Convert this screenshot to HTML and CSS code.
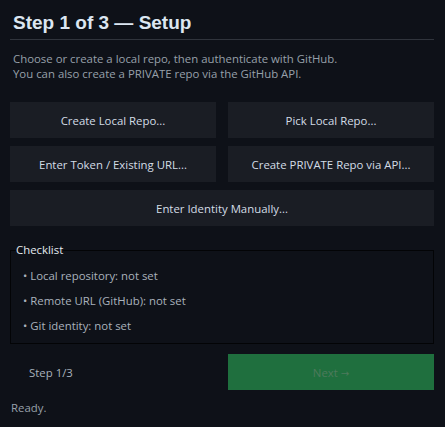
FILE: index.html
```html
<!DOCTYPE html>
<html>
<head>
<meta charset="utf-8">
<link rel="stylesheet" href="styles.css">
</head>
<body>
<div class="app">
  <div class="header">
    <h1 class="title">Step 1 of 3 — Setup</h1>
  </div>
  <p class="desc">Choose or create a local repo, then authenticate with GitHub.<br>You can also create a PRIVATE repo via the GitHub API.</p>
  <div class="actions">
    <button class="btn">Create Local Repo...</button>
    <button class="btn">Pick Local Repo...</button>
    <button class="btn">Enter Token / Existing URL...</button>
    <button class="btn">Create PRIVATE Repo via API...</button>
    <button class="btn btn-wide">Enter Identity Manually...</button>
  </div>
  <fieldset class="checklist">
    <legend class="checklist-title">Checklist</legend>
    <div class="item">• Local repository: not set</div>
    <div class="item">• Remote URL (GitHub): not set</div>
    <div class="item">• Git identity: not set</div>
  </fieldset>
  <div class="footer">
    <div class="step">Step 1/3</div>
    <button class="btn btn-next" disabled>Next <span class="arrow">→</span></button>
  </div>
  <div class="status">Ready.</div>
</div>
</body>
</html>
```
FILE: styles.css
```css
html, body {
  margin: 0;
  padding: 0;
  background: #0e1118;
}
body {
  width: 445px;
  height: 427px;
  overflow: hidden;
  font-family: "Open Sans", "Noto Sans", sans-serif;
  font-size: 11.4px;
  color: #c9d1d9;
}
.app {
  padding: 0 11px 0 10px;
}
.header {
  padding-top: 12px;
  padding-bottom: 5px;
  border-bottom: 1px solid #30343c;
}
.title {
  margin: 0;
  padding-left: 3px;
  font-family: "Liberation Sans", Arial, sans-serif;
  font-weight: bold;
  font-size: 19px;
  line-height: 22px;
  color: #dce6f1;
}
.desc {
  margin: 11px 0 0 3px;
  line-height: 15px;
  color: #97a0aa;
}
.actions {
  margin-top: 21px;
  display: grid;
  grid-template-columns: 1fr 1fr;
  column-gap: 12px;
  row-gap: 8px;
}
.btn {
  height: 36px;
  border: none;
  background: #1a1d24;
  color: #d3dce6;
  font-family: inherit;
  font-size: 11.4px;
  padding: 0;
}
.btn-wide {
  grid-column: 1 / 3;
}
.checklist {
  margin: 17px 0 0;
  padding: 6px 0 5px 0;
  border: 1px solid #030406;
}
.checklist-title {
  margin-left: 5px;
  padding: 0;
  color: #e4e9ef;
  line-height: 14px;
}
.item {
  height: 25px;
  line-height: 25px;
  padding-left: 12px;
  color: #a9b2bc;
}
.footer {
  margin-top: 10px;
  display: grid;
  grid-template-columns: 1fr 1fr;
  column-gap: 12px;
  align-items: center;
}
.step {
  padding-left: 19px;
  color: #a9b2bc;
}
.btn-next {
  background: #1f6f3e;
  color: #4d7a5c;
}
.arrow {
  font-family: "DejaVu Sans", sans-serif;
  font-size: 10px;
}
.status {
  margin-top: 10px;
  padding-left: 1px;
  line-height: 15px;
  color: #97a0aa;
}
```
